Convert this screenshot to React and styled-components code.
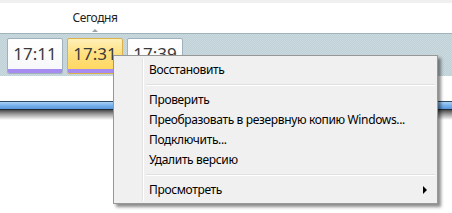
import React from "react";
import styled, { createGlobalStyle } from "styled-components";

const Global = createGlobalStyle`
  html, body { margin: 0; padding: 0; background: #fff; }
  body { width: 452px; height: 213px; overflow: hidden; font-family: "Noto Sans", "Open Sans", sans-serif; }
`;

const Page = styled.div`
  position: relative;
  width: 452px;
  height: 213px;
  background: #fff;
`;

const TopStrip = styled.div`
  height: 3px;
  background: #f0f0f0;
`;

const Header = styled.div`
  height: 30px;
  display: flex;
  align-items: flex-end;
  padding-left: 67px;
`;

const TodayMarker = styled.div`
  width: 56px;
  display: flex;
  flex-direction: column;
  align-items: center;
`;

const TodayLabel = styled.span`
  font-size: 12px;
  line-height: 16px;
  letter-spacing: -0.4px;
  color: #1e1e1e;
  margin-bottom: 3px;
`;

const Caret = styled.span`
  width: 0;
  height: 0;
  border-left: 3px solid transparent;
  border-right: 3px solid transparent;
  border-bottom: 3px solid #9aa3a8;
  margin-bottom: 1px;
`;

const Band = styled.div`
  height: 43px;
  box-sizing: border-box;
  padding: 4px 0 0 7px;
  display: flex;
  gap: 4px;
  border-top: 1px solid #9fb3ba;
  background-color: #c6d6db;
  background-image: repeating-conic-gradient(#bfd0d6 0 25%, #cbdade 0 50%);
  background-size: 2px 2px;
`;

const Tile = styled.div`
  width: 56px;
  height: 36px;
  box-sizing: border-box;
  border: 1px solid ${(p) => (p.$active ? "#d9b24f" : "#9fb2bc")};
  border-radius: 2px;
  background: ${(p) =>
    p.$active
      ? "linear-gradient(#fff0b8, #ffe07e 45%, #ffd65c)"
      : "linear-gradient(#ffffff, #f6f7f8)"};
  display: flex;
  flex-direction: column;
  overflow: hidden;
`;

const TileTime = styled.div`
  flex: 1;
  display: flex;
  align-items: center;
  justify-content: center;
  font-size: 17px;
  color: #3a3a3a;
  padding-bottom: 1px;
`;

const TileBar = styled.div`
  height: 4px;
  background: ${(p) => (p.$show ? "#a68cf0" : "transparent")};
`;

const Gap = styled.div`
  height: 25px;
`;

const BlueBar = styled.div`
  height: 7px;
  border-top: 1px solid #2b4a66;
  border-bottom: 1px solid #1e2c38;
  background: linear-gradient(#a9d0f5, #78b2ec 50%, #5b97dc);
`;

const BarShadow = styled.div`
  height: 10px;
  background: linear-gradient(#4a4a4a, #9a9a9a 40%, #e6e6e6 85%, #fff);
`;

const Menu = styled.div`
  position: absolute;
  left: 113px;
  top: 55px;
  width: 325px;
  height: 149px;
  box-sizing: border-box;
  border: 1px solid #979797;
  background: #f0f0f0;
  padding: 4px 2px 3px 2px;
  box-shadow: 3px 3px 3px rgba(0, 0, 0, 0.45);
  font-size: 12px;
  letter-spacing: -0.35px;
  color: #000;
  &::before {
    content: "";
    position: absolute;
    left: 28px;
    top: 2px;
    bottom: 2px;
    width: 1px;
    background: #e2e3e3;
    border-right: 1px solid #fff;
  }
`;

const Item = styled.div`
  position: relative;
  height: 20px;
  line-height: 20px;
  padding-left: 33px;
  white-space: nowrap;
`;

const Separator = styled.div`
  height: 10px;
  display: flex;
  align-items: center;
  padding-left: 30px;
  &::after {
    content: "";
    flex: 1;
    height: 1px;
    background: #e0e0e0;
    border-bottom: 1px solid #fff;
  }
`;

const SubArrow = styled.span`
  position: absolute;
  right: 8px;
  top: 6px;
  width: 0;
  height: 0;
  border-top: 4px solid transparent;
  border-bottom: 4px solid transparent;
  border-left: 4px solid #000;
`;

const tiles = [
  { time: "17:11", active: false, bar: true },
  { time: "17:31", active: true, bar: true },
  { time: "17:39", active: false, bar: false },
];

export default function App() {
  return (
    <Page>
      <Global />
      <TopStrip />
      <Header>
        <TodayMarker>
          <TodayLabel>Сегодня</TodayLabel>
          <Caret />
        </TodayMarker>
      </Header>
      <Band>
        {tiles.map((t) => (
          <Tile key={t.time} $active={t.active}>
            <TileTime>{t.time}</TileTime>
            <TileBar $show={t.bar} />
          </Tile>
        ))}
      </Band>
      <Gap />
      <BlueBar />
      <BarShadow />
      <Menu>
        <Item>Восстановить</Item>
        <Separator />
        <Item>Проверить</Item>
        <Item>Преобразовать в резервную копию Windows...</Item>
        <Item>Подключить...</Item>
        <Item>Удалить версию</Item>
        <Separator />
        <Item>
          Просмотреть
          <SubArrow />
        </Item>
      </Menu>
    </Page>
  );
}
